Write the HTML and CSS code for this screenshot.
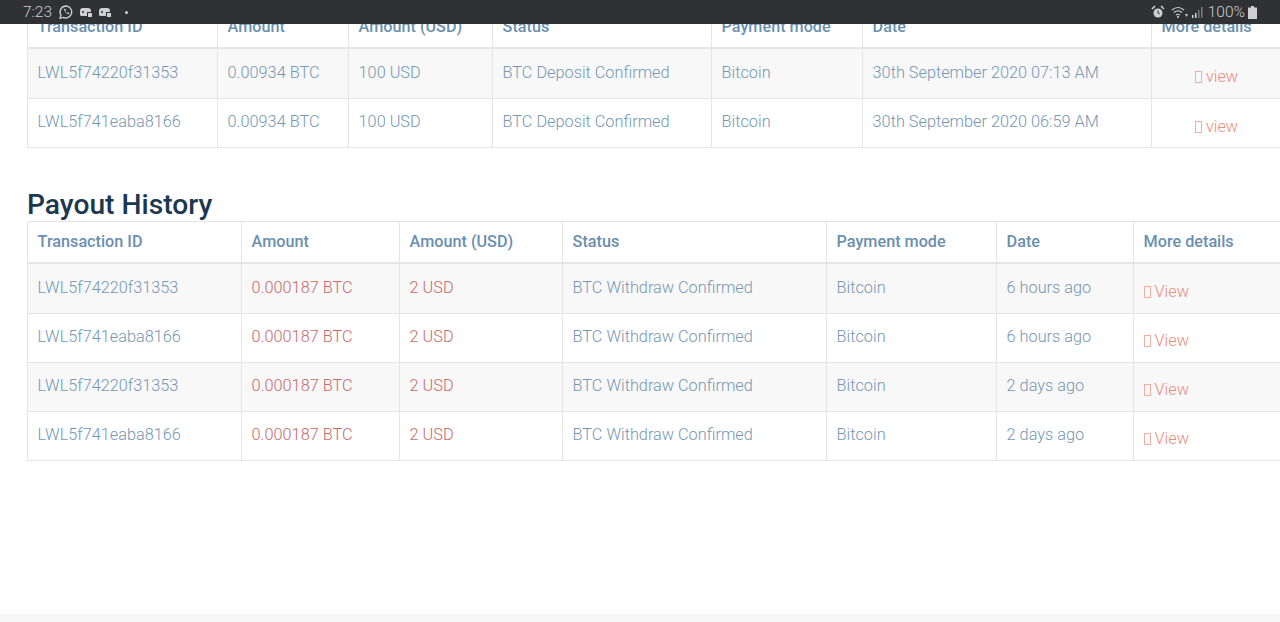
FILE: index.html
```html
<!DOCTYPE html>
<html lang="en">
<head>
<meta charset="utf-8">
<title>Payout History</title>
<link rel="stylesheet" href="styles.css">
</head>
<body>
<header class="status">
  <div class="status-left">
    <span class="clock">7:23</span>
    <svg class="ic" width="16" height="16" viewBox="0 0 16 16"><path d="M8 2a6 6 0 0 0-5.100 9.100L2 14.300l3.100-.9A6 6 0 1 0 8 2z" fill="none" stroke="#cfcfcf" stroke-width="1.300"/><path d="M5.800 5c.9 3 2.300 4.300 5 5.300l.6-1.300-1.500-.8-.7.6c-.9-.4-1.500-1-1.900-1.900l.6-.7-.7-1.500z" fill="#cfcfcf"/></svg>
    <svg class="ic" width="14" height="12" viewBox="0 0 14 12"><path d="M1 9V5q0-3 3-3h5q3 0 3 3v1H8v4H2z" fill="#cfcfcf"/><circle cx="4" cy="6" r="1" fill="#2e3033"/><rect x="9" y="7" width="4" height="4" fill="#cfcfcf"/></svg>
    <svg class="ic" width="14" height="12" viewBox="0 0 14 12"><path d="M1 9V5q0-3 3-3h5q3 0 3 3v1H8v4H2z" fill="#cfcfcf"/><circle cx="4" cy="6" r="1" fill="#2e3033"/><rect x="9" y="7" width="4" height="4" fill="#cfcfcf"/></svg>
    <span class="dot"></span>
  </div>
  <div class="status-right">
    <svg width="14" height="14" viewBox="0 0 14 14"><circle cx="7" cy="8" r="4.500" fill="#cfcfcf"/><path d="M7 5.500V8l1.800 1" fill="none" stroke="#2e3033"/><path d="M1 4l3-3M13 4l-3-3" stroke="#cfcfcf" stroke-width="1.600"/></svg>
    <svg class="wifi" width="17" height="14" viewBox="0 0 17 14"><path d="M1 5q6-5 12 0M3 7.500q4-3.500 8 0M5 10q2-1.500 4 0" fill="none" stroke="#cfcfcf" stroke-width="1.200"/><circle cx="7" cy="12" r="1.100" fill="#cfcfcf"/><path d="M14 9h3l-1.500 3z" fill="#cfcfcf"/></svg>
    <svg class="bars" width="12" height="12" viewBox="0 0 12 12"><rect x="0" y="9" width="1.500" height="3" fill="#cfcfcf"/><rect x="3" y="7" width="1.500" height="5" fill="#cfcfcf"/><rect x="6" y="4" width="1.500" height="8" fill="#7a7a7a"/><rect x="9" y="1" width="1.500" height="11" fill="#7a7a7a"/></svg>
    <span class="pct">100%</span>
    <svg width="9" height="13" viewBox="0 0 9 13"><path d="M3 0h3v1.500h3V13H0V1.500h3z" fill="#cfcfcf"/></svg>
  </div>
</header>

<main class="page">
  <table class="grid deposits">
    <colgroup><col class="d1"><col class="d2"><col class="d3"><col class="d4"><col class="d5"><col class="d6"><col class="d7"></colgroup>
    <thead>
      <tr><th>Transaction ID</th><th>Amount</th><th>Amount (USD)</th><th>Status</th><th>Payment mode</th><th>Date</th><th>More details</th></tr>
    </thead>
    <tbody>
      <tr><td>LWL5f74220f31353</td><td>0.00934 BTC</td><td>100 USD</td><td>BTC Deposit Confirmed</td><td>Bitcoin</td><td>30th September 2020 07:13 AM</td><td class="more center"><span class="tofu"></span> view</td></tr>
      <tr><td>LWL5f741eaba8166</td><td>0.00934 BTC</td><td>100 USD</td><td>BTC Deposit Confirmed</td><td>Bitcoin</td><td>30th September 2020 06:59 AM</td><td class="more center"><span class="tofu"></span> view</td></tr>
    </tbody>
  </table>

  <h2 class="title">Payout History</h2>

  <table class="grid payouts">
    <colgroup><col class="p1"><col class="p2"><col class="p3"><col class="p4"><col class="p5"><col class="p6"><col class="p7"></colgroup>
    <thead>
      <tr><th>Transaction ID</th><th>Amount</th><th>Amount (USD)</th><th>Status</th><th>Payment mode</th><th>Date</th><th>More details</th></tr>
    </thead>
    <tbody>
      <tr><td>LWL5f74220f31353</td><td class="red">0.000187 BTC</td><td class="red">2 USD</td><td>BTC Withdraw Confirmed</td><td>Bitcoin</td><td>6 hours ago</td><td class="more"><span class="tofu"></span> View</td></tr>
      <tr><td>LWL5f741eaba8166</td><td class="red">0.000187 BTC</td><td class="red">2 USD</td><td>BTC Withdraw Confirmed</td><td>Bitcoin</td><td>6 hours ago</td><td class="more"><span class="tofu"></span> View</td></tr>
      <tr><td>LWL5f74220f31353</td><td class="red">0.000187 BTC</td><td class="red">2 USD</td><td>BTC Withdraw Confirmed</td><td>Bitcoin</td><td>2 days ago</td><td class="more"><span class="tofu"></span> View</td></tr>
      <tr><td>LWL5f741eaba8166</td><td class="red">0.000187 BTC</td><td class="red">2 USD</td><td>BTC Withdraw Confirmed</td><td>Bitcoin</td><td>2 days ago</td><td class="more"><span class="tofu"></span> View</td></tr>
    </tbody>
  </table>
</main>

<footer class="foot"></footer>
</body>
</html>
```

FILE: styles.css
```css
* { box-sizing: border-box; }
html, body { margin: 0; height: 622px; overflow: hidden; background: #fff; }
body { display: flex; flex-direction: column; font-family: Roboto, "Liberation Sans", sans-serif; position: relative; }

.status {
  position: absolute; left: 0; top: 0; right: 0; height: 24px; z-index: 2;
  background: #2f3134; color: #cfcfcf;
  display: flex; justify-content: space-between; align-items: center;
  padding: 0 23px 0 23px; font-size: 15.500px; font-weight: 300;
}
.status-left, .status-right { display: flex; align-items: center; }
.status-left { gap: 5px; }
.clock { margin-right: 1px; }
.dot { width: 3px; height: 3px; border-radius: 50%; background: #cfcfcf; margin-left: 8px; }
.status-right { gap: 3px; }
.wifi { margin-left: 3px; }
.bars { margin-left: 1px; }
.pct { margin-left: 1px; }

.page { flex: 1; padding: 6px 0 0 27px; overflow: hidden; min-height: 0; }

.grid { border-collapse: collapse; table-layout: fixed; width: 1254px; font-size: 16.300px; font-weight: 300; color: #7497b3; }
.grid th, .grid td { border: 1px solid #e5e5e5; padding: 0 9.600px; text-align: left; vertical-align: middle; white-space: nowrap; overflow: hidden; }
.grid th { height: 41px; font-size: 16.200px; font-weight: 500; color: #6b8fae; border-bottom-width: 2px; }
.grid td { height: 49px; padding-bottom: 4px; }
.grid tbody tr:first-child td { height: 51px; padding-bottom: 1px; }
.grid tbody tr:nth-child(odd) { background: #f8f8f8; }
.red { color: #c9696a; }
.grid td.more { color: #ee8a7c; padding-top: 8px; }
.grid tbody tr:first-child td.more { padding-top: 7px; }
.deposits td.more { padding-top: 10px; }
.grid td.center { text-align: center; }
.tofu { display: inline-block; width: 7px; height: 12px; border: 1px solid #f3aea4; vertical-align: -1px; }

.d1 { width: 190px; } .d2 { width: 131px; } .d3 { width: 144px; } .d4 { width: 219px; } .d5 { width: 151px; } .d6 { width: 289px; } .d7 { width: 130px; }
.p1 { width: 214px; } .p2 { width: 158px; } .p3 { width: 163px; } .p4 { width: 264px; } .p5 { width: 170px; } .p6 { width: 137px; } .p7 { width: 148px; }

.title { margin: 39px 0 0; height: 34px; font-size: 28.200px; line-height: 36px; font-weight: 500; color: #1c3850; }

.foot { height: 8px; background: #f7f6f7; flex: none; }
```
